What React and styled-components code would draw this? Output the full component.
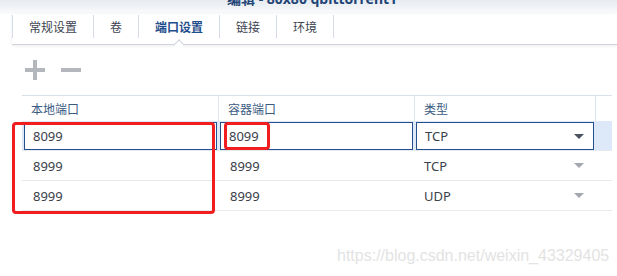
import React from "react";
import styled, { createGlobalStyle } from "styled-components";

const GlobalStyle = createGlobalStyle`
  body {
    margin: 0;
    background: #fff;
    font-family: "Noto Sans", "Noto Sans CJK SC", sans-serif;
  }
`;

const Window = styled.div`
  position: relative;
  width: 617px;
  height: 276px;
  overflow: hidden;
  background: #fff;
`;

const TitleBar = styled.div`
  height: 14px;
  overflow: hidden;
  padding-left: 227px;
  background: linear-gradient(#e7ebf0, #fafbfc);
`;

const TitleText = styled.div`
  margin-top: -9px;
  font-size: 14px;
  line-height: 16px;
  font-weight: 700;
  color: #1f4476;
  white-space: nowrap;
`;

const TabBar = styled.div`
  position: relative;
  display: flex;
  height: 30px;
  margin-left: 12px;
  border-bottom: 1px solid #cfd4da;
  box-shadow: 0 1px 3px rgba(0, 0, 0, 0.08);
`;

const Tab = styled.div`
  position: relative;
  display: flex;
  align-items: center;
  height: 23px;
  margin-top: 1px;
  padding: 0 16px;
  border-left: 1px solid #d6dde6;
  font-size: 12px;
  color: ${p => (p.$active ? "#1f4e8c" : "#3c4450")};
  font-weight: ${p => (p.$active ? 700 : 400)};
  &:last-child {
    border-right: 1px solid #d6dde6;
  }
  ${p =>
    p.$active &&
    `
    &::after {
      content: "";
      position: absolute;
      left: 50%;
      top: 26px;
      width: 7px;
      height: 7px;
      background: #fff;
      border-left: 1px solid #cfd4da;
      border-top: 1px solid #cfd4da;
      transform: translateX(-50%) rotate(45deg);
    }
  `}
`;

const Toolbar = styled.div`
  display: flex;
  align-items: center;
  gap: 16px;
  height: 50px;
  padding-left: 25px;
`;

const Table = styled.div`
  position: relative;
  margin: 0 5px 0 22px;
  border-top: 1px solid #d9e2ec;
`;

const cols = "197px 196px 181px 1fr";

const HeaderRow = styled.div`
  display: grid;
  grid-template-columns: ${cols};
  height: 25px;
`;

const HeaderCell = styled.div`
  display: flex;
  align-items: center;
  padding-left: 9px;
  font-size: 12px;
  color: #3b5b82;
  border-right: 1px solid #dfe6ee;
  &:last-child {
    border-right: none;
  }
`;

const Row = styled.div`
  display: grid;
  grid-template-columns: ${cols};
  height: 30px;
  box-sizing: border-box;
  border-bottom: 1px solid #e6e9ed;
  background: ${p => (p.$editing ? "#dde9f8" : "#fff")};
`;

const Cell = styled.div`
  display: flex;
  align-items: center;
  padding-left: ${p => (p.$edit ? "0" : "11px")};
  padding-top: ${p => (p.$edit ? "1px" : "0")};
  padding-right: ${p => (p.$edit ? "2px" : "0")};
  margin-left: ${p => (p.$edit ? p.$offset || 1 : 0)}px;
  font-size: 13px;
  color: #3b414a;
`;

const InputBox = styled.div`
  flex: 1;
  display: flex;
  align-items: center;
  height: 100%;
  box-sizing: border-box;
  padding-left: 8px;
  background: #fff;
  border: 1px solid #25508e;
`;

const Arrow = styled.span`
  margin-left: auto;
  margin-right: ${p => (p.$dark ? 9 : 12)}px;
  width: 0;
  height: 0;
  border-left: 5px solid transparent;
  border-right: 5px solid transparent;
  border-top: 5px solid ${p => (p.$dark ? "#4b5260" : "#a3a8b0")};
`;

const Mark = styled.div`
  position: absolute;
  left: ${p => p.$x}px;
  top: ${p => p.$y}px;
  width: ${p => p.$w}px;
  height: ${p => p.$h}px;
  box-sizing: border-box;
  border: 3px solid #f01e1e;
  border-radius: 4px;
  pointer-events: none;
`;

const Watermark = styled.div`
  position: absolute;
  left: 337px;
  top: 247px;
  font-family: "Liberation Sans", Arial, sans-serif;
  font-size: 16px;
  color: #e3e3e3;
  white-space: nowrap;
`;

const Plus = () => (
  <svg width="20" height="20" viewBox="0 0 20 20">
    <rect x="0" y="8" width="20" height="4" fill="#b4b7bc" />
    <rect x="8" y="0" width="4" height="20" fill="#b4b7bc" />
  </svg>
);

const Minus = () => (
  <svg width="20" height="20" viewBox="0 0 20 20">
    <rect x="0" y="8" width="20" height="4" fill="#b4b7bc" />
  </svg>
);

const tabs = ["常规设置", "卷", "端口设置", "链接", "环境"];

const rows = [
  { local: "8999", container: "8999", type: "TCP" },
  { local: "8999", container: "8999", type: "UDP" },
];

export default function App() {
  return (
    <Window>
      <GlobalStyle />
      <TitleBar>
        <TitleText>编辑 - 80x80 qbittorrent1</TitleText>
      </TitleBar>
      <TabBar>
        {tabs.map(t => (
          <Tab key={t} $active={t === "端口设置"}>
            {t}
          </Tab>
        ))}
      </TabBar>
      <Toolbar>
        <Plus />
        <Minus />
      </Toolbar>
      <Table>
        <HeaderRow>
          <HeaderCell>本地端口</HeaderCell>
          <HeaderCell>容器端口</HeaderCell>
          <HeaderCell>类型</HeaderCell>
          <HeaderCell />
        </HeaderRow>
        <Row $editing>
          <Cell $edit $offset={2}>
            <InputBox>8099</InputBox>
          </Cell>
          <Cell $edit>
            <InputBox>8099</InputBox>
          </Cell>
          <Cell $edit>
            <InputBox>
              TCP
              <Arrow $dark />
            </InputBox>
          </Cell>
          <Cell />
        </Row>
        {rows.map((r, i) => (
          <Row key={i}>
            <Cell>{r.local}</Cell>
            <Cell>{r.container}</Cell>
            <Cell style={{ paddingLeft: 9 }}>
              {r.type}
              <Arrow />
            </Cell>
            <Cell />
          </Row>
        ))}
        <Mark $x={-10} $y={26} $w={203} $h={92} />
        <Mark $x={202} $y={26} $w={46} $h={28} />
      </Table>
      <Watermark>https://blog.csdn.net/weixin_43329405</Watermark>
    </Window>
  );
}
